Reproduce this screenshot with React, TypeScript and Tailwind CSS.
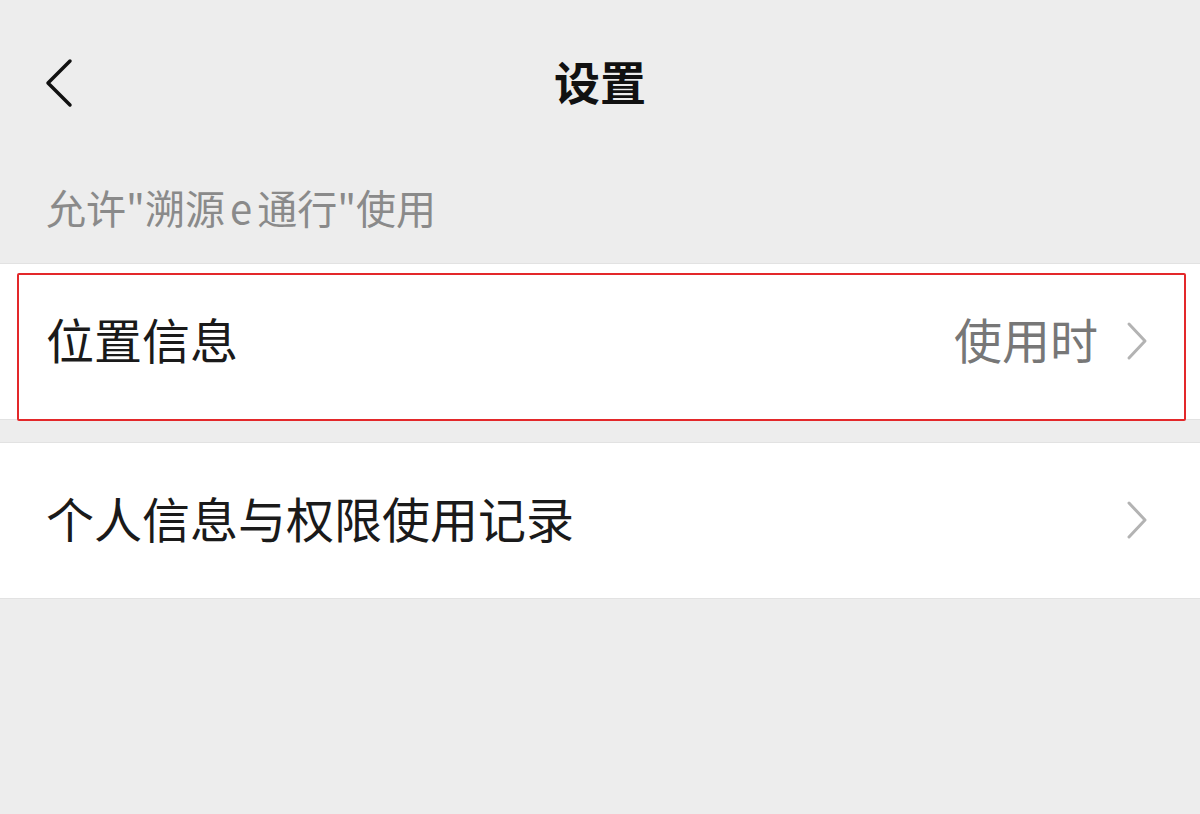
export default function App() {
  const font = { fontFamily: '"Noto Sans CJK SC", "Noto Sans", sans-serif' };

  return (
    <div className="min-h-[814px] w-full bg-[#ededed]" style={font}>
      {/* header */}
      <div className="relative flex h-[160px] items-center justify-center">
        <svg className="absolute left-[40px] top-[54px]" width="40" height="60" viewBox="40 54 40 60" fill="none">
          <path d="M70 61 L48 83 L70 105" stroke="#111" strokeWidth="3.5" strokeLinecap="round" strokeLinejoin="round" />
        </svg>
        <h1 className="text-[46px] font-bold leading-none text-[#111]">设置</h1>
      </div>

      <div className="h-[103px] pl-[46px] pt-[27px]">
        <p className="text-[40px] leading-[40px] text-[#8a8a8a]">
          允许"溯源<span className="mx-[5px]">e</span>通行"使用
        </p>
      </div>

      <div className="relative flex h-[157px] items-center border-y border-[#e2e2e2] bg-white pl-[46px] pr-[52px]">
        <span className="flex-1 pb-[8px] text-[48px] leading-none text-[#1a1a1a]">位置信息</span>
        <span className="mr-[28px] pb-[8px] text-[48px] leading-none text-[#777]">使用时</span>
        <Chevron />
        <div className="pointer-events-none absolute left-[17px] right-[14px] top-[9px] bottom-[-2px] rounded-[2px] border-2 border-[#e3282a]" />
      </div>

      <div className="mt-[22px] flex h-[157px] items-center border-y border-[#e2e2e2] bg-white pl-[46px] pr-[52px]">
        <span className="flex-1 pb-[8px] text-[48px] leading-none text-[#1a1a1a]">个人信息与权限使用记录</span>
        <Chevron />
      </div>
    </div>
  );
}

function Chevron() {
  return (
    <svg className="mb-[2px]" width="22" height="40" viewBox="0 0 22 40" fill="none">
      <path d="M3 3 L19 20 L3 37" stroke="#b3b3b3" strokeWidth="3" strokeLinecap="round" strokeLinejoin="round" />
    </svg>
  );
}
